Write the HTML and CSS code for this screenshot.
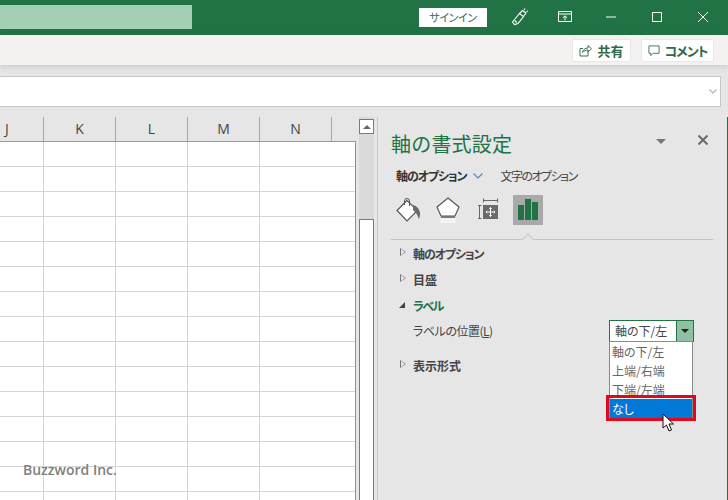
FILE: index.html

```html
<!DOCTYPE html>
<html lang="ja">
<head>
  <meta charset="UTF-8">
  <title>軸の書式設定</title>
  <link rel="stylesheet" href="styles.css">
</head>
<body>

  <div class="titlebar">
    <div class="doc-name"></div>
    <button class="signin">サインイン</button>
    <svg class="tb-icon pen" viewBox="0 0 18 18" width="18" height="18" fill="none" stroke="#fff" stroke-width="1.1"><path d="M1.500 14 8.500 5.500l4 3L7 15.500l-3.500 1z"/><path d="M8.500 5.500l3-3L15 5l-2.500 3.500M3.500 12.500l2.500 2"/><path d="M13 2l1-1.500M15.500 3.500 17 3"/></svg>
    <svg class="tb-icon ribbon-opt" viewBox="0 0 14 12" width="14" height="12" fill="none" stroke="#fff"><path d="M.5.5h13v10H.5zM.5 3h13"/><path d="M7 9.500V5M4.800 6.800 7 4.800l2.200 2"/></svg>
    <svg class="tb-icon minimize" viewBox="0 0 10 10" width="10" height="10" stroke="#fff"><path d="M0 5h10"/></svg>
    <svg class="tb-icon maximize" viewBox="0 0 10 10" width="10" height="10" fill="none" stroke="#fff"><path d="M.5.5h9v9h-9z"/></svg>
    <svg class="tb-icon close" viewBox="0 0 10 10" width="10" height="10" stroke="#fff"><path d="M0 0l10 10M10 0 0 10"/></svg>
  </div>

  <div class="ribbon">
    <button class="rb-btn share">
      <svg viewBox="0 0 13 13" width="13" height="13" fill="none" stroke="#3d6e55"><path d="M9 6.500v5.500H1V4.500h3"/><path d="M3.500 8.500C4 5.500 6 4 9 4V1.500L12.500 4.800 9 8V6C7 6 5 6.800 3.500 8.500z"/></svg>
      共有
    </button>
    <button class="rb-btn comment">
      <svg viewBox="0 0 13 13" width="12" height="12" fill="none" stroke="#3d6e55"><path d="M1 1h11v8H5.500L3 11.500V9H1z"/></svg>
      <span class="comment-text">コメント</span>
    </button>
  </div>

  <div class="formula-row">
    <div class="formula-box">
      <svg viewBox="0 0 8 5" width="8" height="5" fill="none" stroke="#bdbdbd" stroke-width="1.500"><path d="M.5.5 4 4 7.500.5"/></svg>
    </div>
  </div>

  <div class="workspace">
    <div class="sheet">
      <div class="col-head">
        <div class="col col-j">J</div>
        <div class="col">K</div>
        <div class="col">L</div>
        <div class="col">M</div>
        <div class="col">N</div>
      </div>
      <div class="cells"></div>
      <div class="watermark">Buzzword Inc.</div>
    </div>

    <div class="vscroll">
      <div class="sb-up"><span class="sb-arrow"></span></div>
      <div class="sb-thumb"></div>
    </div>

    <div class="panel">
      <div class="panel-head">
        <h1>軸の書式設定</h1>
        <span class="panel-caret"></span>
        <svg class="panel-close" viewBox="0 0 10 10" width="10" height="10" stroke="#6a6a6a" stroke-width="2"><path d="M.5.5l9 9M9.500.5l-9 9"/></svg>
      </div>

      <div class="tabs">
        <span class="tab active kana">軸のオプション</span>
        <svg viewBox="0 0 10 6" width="10" height="6" fill="none" stroke="#4a8cc7" stroke-width="1.200"><path d="M.5.5 5 5 9.500.5"/></svg>
        <span class="tab second">文字のオプション</span>
      </div>

      <div class="icon-row">
        <svg class="pi bucket" viewBox="0 0 26 26" width="26" height="26">
          <path d="M11 3.500 1 13.500l10 10.500 10.500-10.500z" fill="#fff" stroke="#555" stroke-width="1.200"/>
          <path d="M8.500 8V4a2.500 2.500 0 0 1 5 0v5" fill="none" stroke="#555"/>
          <path d="M17 8c4 1 6.500 4 7 8 .2 2-.3 4-1 6-1-2-1.500-4-3-6l-3-3z" fill="#6a6a6a"/>
        </svg>
        <svg class="pi pentagon" viewBox="0 0 24 28" width="24" height="28">
          <path d="M12 2 23 11l-4 9H5L1 11z" fill="#fff" stroke="#555" stroke-width="1.200"/>
          <path d="M5 21h14" stroke="#777" stroke-width="2"/>
          <path d="M5 22h14l1.500 5H3.500z" fill="#f4f4f4"/>
        </svg>
        <svg class="pi size" viewBox="0 0 24 26" width="24" height="26" fill="none">
          <path d="M6 3.500h15M6.500 1.500v4M20.500 1.500v4M1 8.500h3.500M1 21.500h3.500M2.500 8.500v13" stroke="#666"/>
          <path d="M6 8h15v14H6z" fill="#6b6b6b"/>
          <path d="M13.500 10.500v9M9 15h9M12.300 11.700l1.200-1.200 1.200 1.200M12.300 18.300l1.200 1.200 1.200-1.200M10.200 13.800 9 15l1.200 1.200M16.800 13.800 18 15l-1.200 1.200" stroke="#fff"/>
        </svg>
        <div class="pi chart">
          <span class="bar b1"></span>
          <span class="bar b2"></span>
          <span class="bar b3"></span>
        </div>
      </div>

      <div class="rule"><span class="notch"></span></div>

      <div class="section"><span class="tri open-tri"></span><span class="kana">軸のオプション</span></div>
      <div class="section"><span class="tri open-tri"></span>目盛</div>
      <div class="section current"><span class="tri down-tri"></span><span class="kana-tight">ラベル</span></div>

      <div class="field">
        <span class="field-label">ラベルの位置(<u>L</u>)</span>
        <div class="select">
          <div class="select-val">軸の下/左</div>
          <div class="select-btn"><span></span></div>
          <ul class="options">
            <li>軸の下/左</li>
            <li>上端/右端</li>
            <li>下端/左端</li>
            <li class="picked">なし</li>
          </ul>
          <div class="red-box"></div>
          <svg class="cursor" viewBox="0 0 13 20" width="13" height="20"><path d="M1 1v14l3.500-3 2.500 6 2.500-1-2.500-6h4.500z" fill="#fff" stroke="#111"/></svg>
        </div>
      </div>

      <div class="section last"><span class="tri open-tri"></span>表示形式</div>
    </div>
    <div class="edge"></div>
  </div>

</body>
</html>
```

FILE: styles.css

```css
* {
  box-sizing: border-box;
}
html, body {
  margin: 0;
  height: 500px;
  overflow: hidden;
}
body {
  font-family: "Noto Sans CJK JP", "Noto Sans", sans-serif;
  font-feature-settings: "palt";
  font-size: 12px;
  color: #444;
  background: #e6e6e6;
  display: flex;
  flex-direction: column;
}
button {
  font: inherit;
  font-feature-settings: "palt";
  border: none;
  padding: 0;
}
.kana {
  letter-spacing: -1.1px;
}
.kana-tight {
  letter-spacing: -1.5px;
}

/* title bar */
.titlebar {
  height: 35px;
  background: #217346;
  display: flex;
  align-items: center;
  flex: none;
}
.doc-name {
  width: 192px;
  height: 24px;
  margin-top: -1px;
  background: #a3cfb4;
}
.signin {
  width: 68px;
  height: 19px;
  margin-left: 227px;
  margin-top: -1px;
  background: #fff;
  color: #3b6a52;
  font-size: 11px;
  line-height: 19px;
  letter-spacing: -0.4px;
}
.tb-icon {
  flex: none;
  margin-top: -1px;
}
.pen { margin-left: 24px; }
.ribbon-opt { margin-left: 29px; }
.minimize { margin-left: 34px; }
.maximize { margin-left: 36px; }
.close { margin-left: 36px; }

/* ribbon */
.ribbon {
  height: 30px;
  background: #f3f2f1;
  display: flex;
  align-items: center;
  justify-content: flex-end;
  padding: 0 14px 0 0;
  gap: 10px;
  flex: none;
  position: relative;
  box-shadow: 0 2px 6px rgba(0, 0, 0, 0.12);
}
.rb-btn {
  height: 23px;
  background: #fff;
  border: 1px solid #e8e8e8;
  border-radius: 2px;
  color: #2f6a4c;
  font-size: 13px;
  font-weight: 700;
  display: flex;
  align-items: center;
  justify-content: center;
  gap: 5px;
  margin-top: 1px;
}
.share { width: 59px; }
.comment { width: 73px; }
.comment-text {
  letter-spacing: -1.1px;
}

/* formula bar */
.formula-row {
  height: 52px;
  padding: 11px 7px 0 0;
  flex: none;
}
.formula-box {
  height: 31px;
  background: #fff;
  border: 1px solid #c6c6c6;
  border-left: none;
  display: flex;
  align-items: center;
  justify-content: flex-end;
  padding-right: 3px;
}

/* sheet */
.workspace {
  flex: 1;
  display: flex;
  min-height: 0;
}
.sheet {
  width: 356px;
  flex: none;
  position: relative;
  display: flex;
  flex-direction: column;
}
.col-head {
  height: 25px;
  display: flex;
  flex: none;
  border-bottom: 1px solid #9b9b9b;
}
.col {
  width: 72px;
  border-right: 1px solid #a8a8a8;
  font-family: "Open Sans", sans-serif;
  font-size: 14px;
  color: #444;
  text-align: center;
  line-height: 24px;
}
.col-j {
  width: 44px;
  padding-left: 5px;
  text-align: left;
}
.cells {
  flex: 1;
  background-color: #fff;
  background-image:
    repeating-linear-gradient(to bottom, transparent 0 24px, #d4d4d4 24px 25px),
    repeating-linear-gradient(to right, transparent 0 71px, #d4d4d4 71px 72px);
  background-position: 0 0, -28px 0;
  border-right: 1px solid #8f8f8f;
}
.watermark {
  position: absolute;
  left: 23px;
  bottom: 21px;
  font-family: "Open Sans", sans-serif;
  font-size: 14px;
  font-weight: 600;
  color: #808080;
}

/* scrollbar */
.vscroll {
  width: 19px;
  flex: none;
  padding-left: 3px;
  display: flex;
  flex-direction: column;
  background: linear-gradient(to right, #e6e6e6 3px, #dadada 3px 18px, #e6e6e6 18px);
}
.sb-up {
  width: 15px;
  height: 15px;
  margin-top: 2px;
  background: #fff;
  border: 1px solid #7a7a7a;
  display: flex;
  align-items: center;
  justify-content: center;
}
.sb-arrow {
  border-left: 4px solid transparent;
  border-right: 4px solid transparent;
  border-bottom: 4px solid #666;
}
.sb-thumb {
  width: 15px;
  flex: 1;
  margin-top: 85px;
  background: #fff;
  border: 1px solid #7a7a7a;
  border-bottom: none;
}

/* format pane */
.panel {
  flex: 1;
  margin-left: 2px;
  border-left: 1px solid #c8c8c8;
  padding: 0 13px;
  background: #e6e6e6;
}
.panel-head {
  height: 47px;
  display: flex;
  align-items: center;
  padding-top: 5px;
}
.panel-head h1 {
  margin: 0;
  font-size: 20px;
  font-weight: 400;
  color: #217346;
  letter-spacing: 0.2px;
  font-feature-settings: normal;
}
.panel-caret {
  margin-left: 144px;
  margin-top: -4px;
  border-left: 5px solid transparent;
  border-right: 5px solid transparent;
  border-top: 5px solid #777;
}
.panel-close {
  margin-left: 32px;
  margin-top: -6px;
}
.tabs {
  height: 24px;
  display: flex;
  align-items: center;
  padding-left: 5px;
}
.tab {
  color: #444;
  line-height: 1;
}
.active {
  font-weight: 700;
  color: #333;
}
.tabs svg {
  margin-left: 7px;
}
.second {
  margin-left: 17px;
  letter-spacing: -1.5px;
}
.icon-row {
  height: 34px;
  margin-top: 5px;
  display: flex;
  align-items: center;
  padding-left: 5px;
}
.pi {
  flex: none;
}
.pentagon { margin-left: 14px; }
.size { margin-left: 17px; }
.chart {
  width: 30px;
  height: 30px;
  margin-left: 12px;
  background: #a9a9a9;
  display: flex;
  align-items: flex-end;
  justify-content: center;
  gap: 1px;
  padding-bottom: 5px;
}
.bar {
  width: 6px;
  background: #217346;
}
.b1 { height: 15px; }
.b2 { height: 21px; }
.b3 { height: 18px; }
.rule {
  height: 1px;
  margin-top: 12px;
  margin-right: 1px;
  background: #c6c6c6;
  position: relative;
}
.notch {
  position: absolute;
  left: 133px;
  top: -4px;
  width: 8px;
  height: 8px;
  background: #e6e6e6;
  border-left: 1px solid #c6c6c6;
  border-top: 1px solid #c6c6c6;
  transform: rotate(45deg);
}
.section {
  height: 26px;
  display: flex;
  align-items: center;
  padding-left: 22px;
  position: relative;
  font-weight: 700;
  color: #444;
}
.current {
  color: #217346;
}
.tri {
  position: absolute;
  left: 9px;
  top: 8px;
}
.open-tri {
  border-left: 6px solid #777;
  border-top: 4.500px solid transparent;
  border-bottom: 4.500px solid transparent;
}
.open-tri::after {
  content: "";
  position: absolute;
  left: -5px;
  top: -3px;
  border-left: 4px solid #e6e6e6;
  border-top: 3px solid transparent;
  border-bottom: 3px solid transparent;
}
.down-tri {
  top: 10px;
  left: 8px;
  border-right: 6px solid #444;
  border-top: 6px solid transparent;
}
.field {
  height: 24px;
  display: flex;
  align-items: center;
  justify-content: space-between;
  padding: 0 20px 0 22px;
  font-weight: 400;
}
.field-label {
  letter-spacing: -0.5px;
}
.select {
  width: 85px;
  height: 22px;
  display: flex;
  position: relative;
  border: 1px solid #217346;
  background: #fff;
  margin-top: 1px;
}
.select-val {
  flex: 1;
  padding-left: 5px;
  line-height: 20px;
  color: #444;
}
.select-btn {
  width: 17px;
  background: #8fc0a3;
  border-left: 1px solid #217346;
  display: flex;
  align-items: center;
  justify-content: center;
}
.select-btn span {
  border-left: 4px solid transparent;
  border-right: 4px solid transparent;
  border-top: 4px solid #222;
}
.options {
  position: absolute;
  left: -1px;
  top: 20px;
  width: 84px;
  margin: 0;
  padding: 0;
  list-style: none;
  background: #fff;
  border: 1px solid #8a8a8a;
}
.options li {
  height: 19px;
  line-height: 19px;
  padding-left: 2px;
  color: #666;
}
.options .picked {
  background: #0078d7;
  color: #fff;
}
.red-box {
  position: absolute;
  left: -4px;
  top: 74px;
  width: 90px;
  height: 26px;
  border: 3px solid #e2071a;
}
.cursor {
  position: absolute;
  left: 52px;
  top: 92px;
}
.last {
  margin-top: 10px;
}
.edge {
  width: 1px;
  flex: none;
  background: #217346;
}
```
